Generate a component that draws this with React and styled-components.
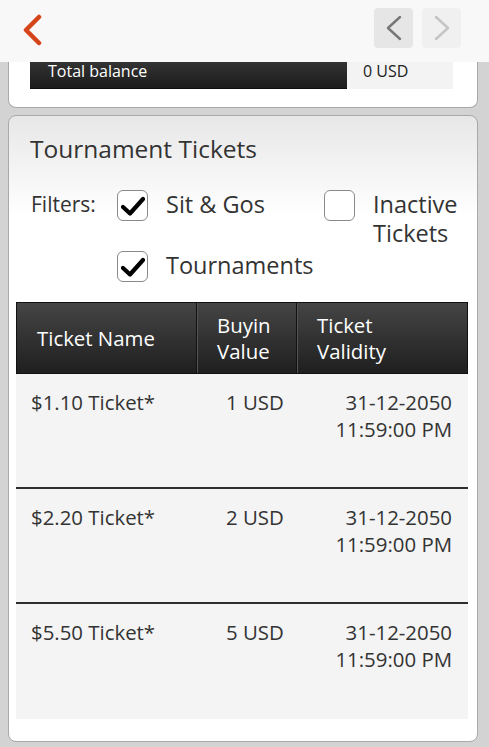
import React from "react";
import styled, { createGlobalStyle } from "styled-components";

const Global = createGlobalStyle`
  html, body { margin: 0; padding: 0; }
  body {
    background: #d3d3d3;
    font-family: "Open Sans", "Noto Sans", sans-serif;
    color: #333;
  }
`;

const Page = styled.div`
  width: 489px;
  min-height: 747px;
  background: #d3d3d3;
`;

const Header = styled.header`
  height: 62px;
  background: #f8f8f8;
  display: flex;
  align-items: center;
  justify-content: space-between;
  padding: 0 28px 0 21px;
  box-sizing: border-box;
`;

const BackButton = styled.button`
  border: 0;
  background: none;
  padding: 0;
  width: 24px;
  height: 32px;
  display: flex;
  align-items: center;
  justify-content: center;
  margin-top: -3px;
`;

const NavGroup = styled.div`
  display: flex;
  gap: 9px;
  align-self: flex-start;
  margin-top: 8px;
`;

const NavButton = styled.button`
  border: 0;
  width: 39px;
  height: 40px;
  border-radius: 4px;
  background: ${(p) => (p.$disabled ? "#f0f0f0" : "#e6e6e6")};
  display: flex;
  align-items: center;
  justify-content: center;
  padding: 0;
`;

const Main = styled.main`
  padding: 0 11px 7px 8px;
`;

const BalancePanel = styled.section`
  background: #fff;
  border: 1px solid #a9a9a9;
  border-top: 0;
  border-radius: 0 0 8px 8px;
  padding: 0 24px 18px 21px;
`;

const BalanceRow = styled.div`
  display: grid;
  grid-template-columns: 317px 1fr;
  height: 27px;
`;

const BalanceLabel = styled.div`
  background: linear-gradient(#333, #1c1c1c);
  color: #fff;
  font-size: 16px;
  line-height: 18px;
  padding: 0 0 0 18px;
  border-bottom: 1px solid #0e0e0e;
`;

const BalanceValue = styled.div`
  background: #f3f3f3;
  font-size: 16px;
  line-height: 18px;
  padding-left: 16px;
  color: #222;
`;

const TicketsPanel = styled.section`
  margin-top: 7px;
  border: 1px solid #a9a9a9;
  border-radius: 8px;
  background: linear-gradient(#e7e7e7 0px, #ffffff 100px, #ffffff 100%);
  padding: 17px 9px 22px 7px;
`;

const Title = styled.h2`
  margin: 0 0 0 14px;
  font-weight: 400;
  font-size: 24.5px;
  line-height: 32px;
  color: #333;
`;

const Filters = styled.div`
  display: flex;
  margin: 25px 0 0 15px;
`;

const FiltersLabel = styled.div`
  width: 86px;
  font-size: 21px;
  line-height: 29px;
  color: #333;
`;

const Options = styled.div`
  display: grid;
  grid-template-columns: 207px 1fr;
  row-gap: 3px;
  align-items: start;
`;

const Option = styled.label`
  display: flex;
  align-items: flex-start;
  gap: 18px;
  grid-column: ${(p) => p.$col || "auto"};
`;

const Box = styled.span`
  width: 31px;
  height: 31px;
  box-sizing: border-box;
  border: 1px solid #8a8a8a;
  border-radius: 6px;
  background: #fff;
  flex: none;
  display: flex;
  align-items: center;
  justify-content: center;
`;

const OptionText = styled.span`
  font-size: 23.5px;
  line-height: 29px;
  color: #333;
  width: ${(p) => p.$w || "auto"};
`;

const Table = styled.div`
  margin-top: 20px;
`;

const HeadRow = styled.div`
  display: grid;
  grid-template-columns: 179px 100px 1fr;
  height: 72px;
  background: linear-gradient(#454545, #1f1f1f);
  border: 1px solid #111;
  box-sizing: border-box;
  box-shadow: 0 1px 0 #777;
`;

const HeadCell = styled.div`
  color: #fff;
  font-size: 20.4px;
  line-height: 26px;
  padding-left: ${(p) => p.$pl || 20}px;
  display: flex;
  align-items: center;
  border-left: ${(p) => (p.$first ? "0" : "1px solid #111")};
  box-shadow: ${(p) => (p.$first ? "none" : "inset 1px 0 0 #555")};
`;

const Row = styled.div`
  display: grid;
  grid-template-columns: 180px 100px 1fr;
  height: 115px;
  box-sizing: border-box;
  background: #f4f4f4;
  border-bottom: ${(p) => (p.$last ? "0" : "2px solid #2e2e2e")};
  padding-top: 15px;
  font-size: 20.4px;
  line-height: 27px;
  color: #333;
`;

const Cell = styled.div`
  padding-left: ${(p) => p.$pl || 0}px;
  padding-right: ${(p) => p.$pr || 0}px;
  text-align: ${(p) => p.$align || "left"};
`;

const Check = () => (
  <svg width="24" height="20" viewBox="0 0 24 20">
    <path d="M2 11 L9 17.5 L22 3" fill="none" stroke="#000" strokeWidth="4.2" strokeLinecap="round" strokeLinejoin="round" />
  </svg>
);

const rows = [
  { name: "$1.10 Ticket*", value: "1 USD" },
  { name: "$2.20 Ticket*", value: "2 USD" },
  { name: "$5.50 Ticket*", value: "5 USD" },
];

export default function App() {
  return (
    <Page>
      <Global />
      <Header>
        <BackButton aria-label="Back">
          <svg width="24" height="32" viewBox="0 0 24 32">
            <path d="M18 3 L5 16 L18 29" fill="none" stroke="#d64519" strokeWidth="4.5" strokeLinecap="round" strokeLinejoin="round" />
          </svg>
        </BackButton>
        <NavGroup>
          <NavButton aria-label="Previous">
            <svg width="20" height="26" viewBox="0 0 20 26">
              <path d="M16 2 L4 13 L16 24" fill="none" stroke="#777" strokeWidth="2.4" strokeLinecap="round" strokeLinejoin="round" />
            </svg>
          </NavButton>
          <NavButton $disabled aria-label="Next">
            <svg width="20" height="26" viewBox="0 0 20 26">
              <path d="M4 2 L16 13 L4 24" fill="none" stroke="#c4c4c4" strokeWidth="2.4" strokeLinecap="round" strokeLinejoin="round" />
            </svg>
          </NavButton>
        </NavGroup>
      </Header>
      <Main>
        <BalancePanel>
          <BalanceRow>
            <BalanceLabel>Total balance</BalanceLabel>
            <BalanceValue>0 USD</BalanceValue>
          </BalanceRow>
        </BalancePanel>
        <TicketsPanel>
          <Title>Tournament Tickets</Title>
          <Filters>
            <FiltersLabel>Filters:</FiltersLabel>
            <Options>
              <Option>
                <Box><Check /></Box>
                <OptionText>Sit &amp; Gos</OptionText>
              </Option>
              <Option>
                <Box />
                <OptionText $w="90px">Inactive Tickets</OptionText>
              </Option>
              <Option $col="1">
                <Box><Check /></Box>
                <OptionText>Tournaments</OptionText>
              </Option>
            </Options>
          </Filters>
          <Table>
            <HeadRow>
              <HeadCell $first>Ticket Name</HeadCell>
              <HeadCell>Buyin<br />Value</HeadCell>
              <HeadCell>Ticket<br />Validity</HeadCell>
            </HeadRow>
            {rows.map((r, i) => (
              <Row key={r.name} $last={i === rows.length - 1}>
                <Cell $pl={15}>{r.name}</Cell>
                <Cell $pl={30}>{r.value}</Cell>
                <Cell $align="right" $pr={16}>31-12-2050<br />11:59:00 PM</Cell>
              </Row>
            ))}
          </Table>
        </TicketsPanel>
      </Main>
    </Page>
  );
}
